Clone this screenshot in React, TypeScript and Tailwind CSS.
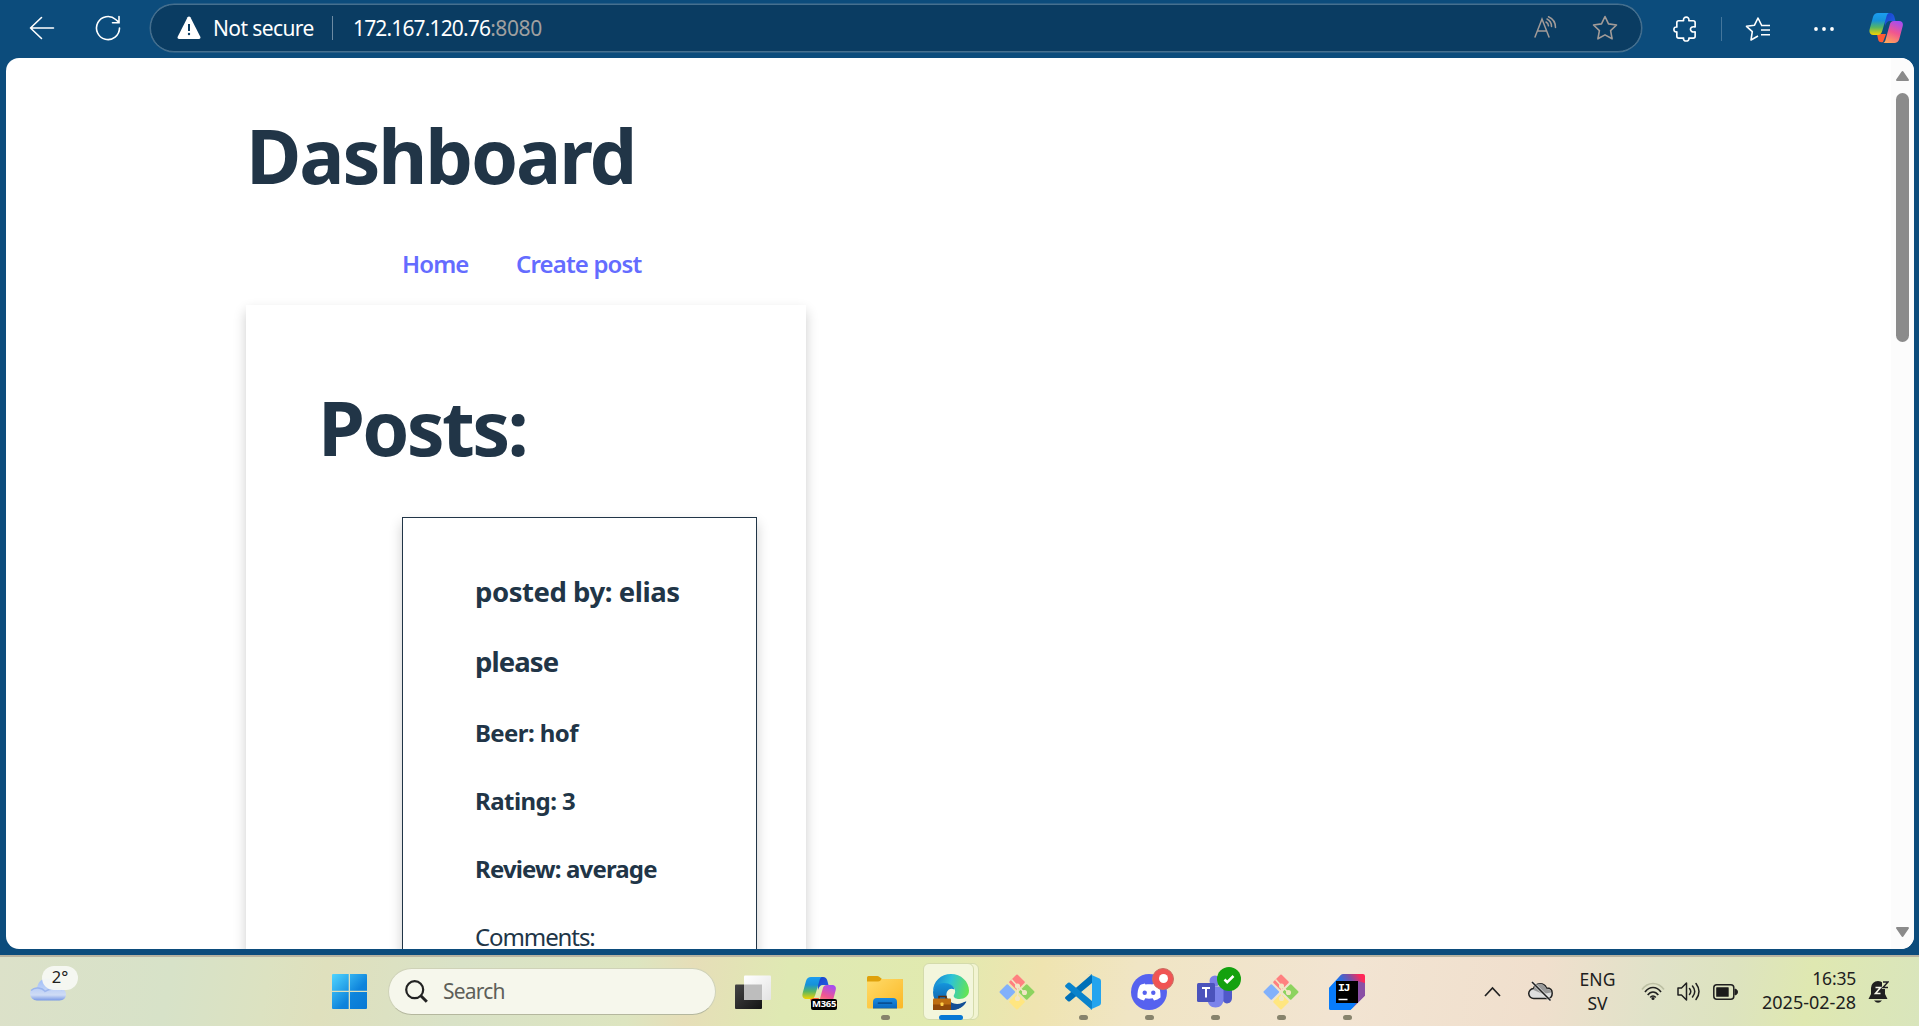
import type { ReactNode } from "react";

function GitIcon() {
  return (
    <svg className="size-9" viewBox="0 0 36 36">
      <g strokeWidth="2" strokeLinejoin="round">
        <path d="M18 1.500 24.800 8.300 18 15.100 11.200 8.300Z" fill="#ff8080" stroke="#ff8080" />
        <path d="M8.300 11.200 15.100 18 8.300 24.800 1.500 18Z" fill="#82b1fb" stroke="#82b1fb" />
        <path d="M27.700 11.200 34.500 18 27.700 24.800 20.900 18Z" fill="#8dd35f" stroke="#8dd35f" />
        <path d="M18 20.900 24.800 27.700 18 34.500 11.200 27.700Z" fill="#ffe680" stroke="#ffe680" />
      </g>
      <g stroke="#f2e6c4" strokeWidth="1.5" fill="#f2e6c4">
        <path d="M12.500 5.500 18.500 12V25M18.500 12 25.500 18.500" fill="none" />
        <circle cx="18.500" cy="12" r="1.800" />
        <circle cx="25.500" cy="18.500" r="1.800" />
        <circle cx="18.500" cy="24.500" r="1.800" />
      </g>
    </svg>
  );
}

function CopilotShape({ id }: { id: string }) {
  return (
    <>
      <defs>
        <linearGradient id={id + "a"} x1="0" y1="0" x2="0" y2="1">
          <stop offset="0" stopColor="#1b9df0" />
          <stop offset=".35" stopColor="#1692d8" />
          <stop offset=".65" stopColor="#55b565" />
          <stop offset="1" stopColor="#f5d400" />
        </linearGradient>
        <linearGradient id={id + "b"} x1=".7" y1="0" x2=".3" y2="1">
          <stop offset="0" stopColor="#a64df0" />
          <stop offset=".5" stopColor="#f1568f" />
          <stop offset="1" stopColor="#ffa45c" />
        </linearGradient>
        <linearGradient id={id + "c"} x1="0" y1="0" x2="1" y2="1">
          <stop offset="0" stopColor="#1a3fc8" />
          <stop offset="1" stopColor="#2063e8" />
        </linearGradient>
      </defs>
      <path d="M15 1h6c2.500 0 3.600 1.200 4.300 3.500L26.500 9H21c-3 0-4 2-5 5Z" fill={`url(#${id}c)`} />
      <path d="M8 22h9l-3 8c-3 1-4.500-.5-5-3Z" fill="#ff5a35" />
      <path d="M9 1h11.500c-2 0-2.500 1.700-3.300 4.500L13.200 19c-.8 2.500-2 4-5 4H4.500C1 23-.2 20.500.7 17L4 5C4.800 2.200 6.500 1 9 1Z" fill={`url(#${id}a)`} />
      <path d="M24 9h6c3.500 0 4.500 2.500 3.600 5.500L30.300 27c-.8 2.800-2.500 4-5 4H13.500c2.200 0 2.600-1.700 3.400-4.500L20.500 13.500C21.300 10.500 22 9 25 9Z" fill={`url(#${id}b)`} />
    </>
  );
}

function BrowserBar() {
  return (
    <header className="flex h-[58px] shrink-0 items-start bg-[#0c4c7c] text-white">
      <div className="flex h-14 w-[150px] items-center pl-[29px] gap-[40px]">
        <svg className="size-[26px]" viewBox="0 0 26 26" fill="none" stroke="white" strokeWidth="1.6" strokeLinecap="round" strokeLinejoin="round">
          <path d="M24.500 13H1.500M12.500 2.500 1.500 13l11 10.500" />
        </svg>
        <svg className="size-[26px]" viewBox="0 0 26 26" fill="none" stroke="white" strokeWidth="1.6" strokeLinecap="round">
          <path d="M24.500 13a11.500 11.500 0 1 1-3.800-8.500l3 2.700M24 1.500V7.700H17.500" />
        </svg>
      </div>
      <div className="mt-1 flex h-12 w-[1492px] items-center rounded-full border border-[#46708f] bg-[#0a3c62] shadow-[0_0_0_0.5px_#46708f]">
        <svg className="ml-[26px] size-6" viewBox="0 0 24 24">
          <path d="M10.600 1.200c.6-1.100 2.200-1.100 2.800 0l9.900 19.500c.6 1.200-.1 2.300-1.400 2.300H2.100c-1.300 0-2-1.100-1.400-2.300Z" fill="white" />
          <path d="M12 8v7" stroke="#0a3c62" strokeWidth="2" />
          <circle cx="12" cy="18" r="1.200" fill="#0a3c62" />
        </svg>
        <span className="ml-[12px] mt-0.5 w-[107px] whitespace-nowrap text-[21px] tracking-[-0.6px]">Not secure</span>
        <span className="ml-[12px] h-6 w-px bg-[#6d8ba3]" />
        <span className="ml-[20px] mt-0.5 whitespace-nowrap text-[21px] tracking-[-0.850px]">172.167.120.76<span className="tracking-[-0.4px] text-[#a0a0a0]">:8080</span></span>
        <svg className="ml-auto mr-[33px] h-6 w-[26px]" viewBox="0 0 26 24" fill="none" stroke="#a29b98" strokeWidth="1.500" strokeLinecap="round">
          <path d="M2 21 9 3l7 18M4.500 15h9M14 3c3.200 1.500 4.500 4 4.500 7.500M15.500.8c4.500 2 7 5.500 7 10.700M13 6c1.600.9 2.300 2 2.500 3.800" />
        </svg>
        <svg className="mr-[23px] size-[26px]" viewBox="0 0 26 26" fill="none" stroke="#a29b98" strokeWidth="1.600" strokeLinejoin="round">
          <path d="m13 1.500 3.500 7.400 8 1.100-5.900 5.600 1.500 8.200L13 19.900l-7.100 3.900 1.500-8.200L1.500 10l8-1.100Z" />
        </svg>
      </div>
      <div className="flex h-14 flex-1 items-center pl-[30px]">
        <svg className="mt-px size-[27px]" viewBox="0 0 28 28" fill="none" stroke="white" strokeWidth="1.700" strokeLinejoin="round">
          <path d="M7 6h5c-1-5 6.500-5 5.500 0H22c1.200 0 2 .8 2 2v4.500c-6.500-2-6.500 6.500 0 5V22c0 1.200-.8 2-2 2h-4.500c1 4-6.500 4-5.500 0H7c-1.200 0-2-.8-2-2v-4.500c-4 1-4-6 0-5V8c0-1.200.8-2 2-2Z" />
        </svg>
        <span className="ml-[22px] mt-0.5 h-6 w-px bg-[#44769c]" />
        <svg className="ml-[23px] mt-px size-[26px]" viewBox="0 0 26 26" fill="none" stroke="white" strokeWidth="1.600" strokeLinejoin="round">
          <path d="M24.500 9.500h-7.800L13 2 9.500 9.200l-8 1.100 5.800 5.400L6 24l7-4M16 14h9M16 18.800h9M16 9.500h9" />
        </svg>
        <svg className="ml-[43px] mt-0.5 h-2 w-5" viewBox="0 0 20 8" fill="white">
          <circle cx="2" cy="4" r="1.900" /><circle cx="10" cy="4" r="1.900" /><circle cx="18" cy="4" r="1.900" />
        </svg>
        <svg className="ml-[35px] h-8 w-[34px]" viewBox="0 0 34 32"><CopilotShape id="top" /></svg>
      </div>
    </header>
  );
}

function Dashboard() {
  return (
    <main className="relative mx-1.5 mr-[5px] flex h-[891px] shrink-0 overflow-hidden rounded-[13px] bg-white text-[#213547]">
      <div className="ml-[240px] w-[560px] pt-[55px]">
        <h1 className="h-[84px] whitespace-nowrap text-[75.6px] leading-[84px] font-bold tracking-[-2.1px]">Dashboard</h1>
        <nav className="mt-[49px] flex h-9 gap-12 pl-[156px] text-[24px] leading-9 font-semibold text-[#646cff]">
          <a className="w-[66px] whitespace-nowrap tracking-[-0.9px]">Home</a>
          <a className="whitespace-nowrap tracking-[-0.850px]">Create post</a>
        </nav>
        <section className="mt-[23px] h-[900px] pl-[72px] pt-[80px] shadow-[0_6px_12px_rgba(0,0,0,0.2)]">
          <h1 className="h-[84px] whitespace-nowrap text-[75.6px] leading-[84px] font-bold tracking-[-2.700px]">Posts:</h1>
          <article className="mt-[48px] ml-[84px] flex h-[700px] w-[355px] flex-col border border-[#213547] pt-[53px] pl-[72px] text-[24px] leading-9 font-bold shadow-[0_6px_12px_rgba(0,0,0,0.2)]">
            <h3 className="text-[27.500px] leading-[42px] tracking-[-0.450px]">posted by: elias</h3>
            <h3 className="mt-7 text-[27.500px] leading-[42px] tracking-[-0.9px]">please</h3>
            <h4 className="mt-8 tracking-[-0.6px]">Beer: hof</h4>
            <h4 className="mt-8 tracking-[-0.550px]">Rating: 3</h4>
            <h4 className="mt-8 tracking-[-0.850px]">Review: average</h4>
            <p className="mt-8 font-normal tracking-[-1.1px]">Comments:</p>
          </article>
        </section>
      </div>
      <div className="ml-auto flex w-[23px] flex-col items-center bg-[#fcfcfc] pt-[12px] pb-[11px]">
        <svg className="h-3 w-[15px]" viewBox="0 0 15 12"><path d="M7.500 2 13 10H2Z" fill="#8b8b8b" stroke="#8b8b8b" strokeWidth="2" strokeLinejoin="round" /></svg>
        <div className="mt-[11px] h-[249px] w-[13px] rounded-full bg-[#8b8b8b]" />
        <svg className="mt-auto h-3 w-[15px]" viewBox="0 0 15 12"><path d="M7.500 10 13 2H2Z" fill="#8b8b8b" stroke="#8b8b8b" strokeWidth="2" strokeLinejoin="round" /></svg>
      </div>
    </main>
  );
}

function TaskItem({ children, running = false }: { children: ReactNode; running?: boolean }) {
  return (
    <div className="relative flex h-[69px] w-[66px] items-center justify-center">
      {children}
      {running && <span className="absolute top-[58px] left-[29px] h-[5px] w-[9px] rounded-full bg-[#87836c]" />}
    </div>
  );
}

function Taskbar() {
  return (
    <footer className="flex h-[71px] shrink-0 items-center border-t-2 border-[#b8b3a0] bg-[linear-gradient(100deg,#dce1c9_0%,#d7e2c8_9%,#dce2c1_14%,#dfe0bd_17%,#d9e2c7_24%,#dde5c0_33%,#e6deb8_36%,#dfe9b3_41%,#e1eaaf_49%,#efe4b0_54%,#f0e5c4_59%,#f2e4d2_70%,#f0dfcd_80%,#e0e2c8_86%,#dde3bf_90%,#dfe8b1_94%,#d9e5bc_100%)] text-[#202020]">
      <div className="relative ml-[30px] h-9 w-[302px]">
        <svg className="mt-1 h-[23px] w-9" viewBox="0 0 36 24" preserveAspectRatio="none">
          <defs><linearGradient id="cloud" x1="0" y1="0" x2="0" y2="1"><stop stopColor="#9ebcf8" /><stop offset=".75" stopColor="#cfdcf5" /><stop offset="1" stopColor="#7798e6" /></linearGradient></defs>
          <path d="M7 23.500a7 7 0 0 1-7-7c0-4 3-6.500 7-6.500C8.500 3.500 12 .5 17 .5c5.500 0 9 4.500 10 9.500 5 0 9 2.500 9 7 0 4-2.500 6.500-6.500 6.500Z" fill="url(#cloud)" />
          <path d="M1 13c4-4 11-3 14 1 4-3 12-4 17-2" stroke="#84a4ea" strokeWidth="1.500" fill="none" opacity=".6" />
        </svg>
        <span className="absolute -top-[8px] left-3 flex h-6 w-9 items-center justify-center rounded-full bg-[#f7f8f3]/95 text-[16.500px]">2°</span>
      </div>
      <svg className="size-[35px]" viewBox="0 0 35 35">
        <defs><linearGradient id="win" gradientUnits="userSpaceOnUse" x1="0" y1="0" x2="35" y2="35"><stop stopColor="#4fd5ff" /><stop offset=".6" stopColor="#0e84dc" /><stop offset="1" stopColor="#0878d4" /></linearGradient></defs>
        <path d="M1 0h15.700v16.700H0V1Q0 0 1 0ZM18 0h16q1 0 1 1v15.700H18ZM0 18h16.700v17H1q-1 0-1-1ZM18 18h17v16q0 1-1 1H18Z" fill="url(#win)" />
      </svg>
      <div className="ml-[21px] flex h-[47px] w-[328px] items-center rounded-full border border-[#cfd2b8] border-b-[#b4b79e] bg-[#f6f7ec] pl-[16px] text-[21px] tracking-[-0.8px] text-[#5e5f59]">
        <svg className="mr-[15px] size-[23px]" viewBox="0 0 23 23" fill="none" stroke="#222" strokeWidth="2.200">
          <circle cx="9.700" cy="9.700" r="8.500" /><path d="m15.800 15.800 6 6" strokeWidth="3" />
        </svg>
        Search
      </div>
      <div className="ml-[4px] flex">
        <TaskItem>
          <svg className="size-9" viewBox="0 0 36 36">
            <defs><linearGradient id="tv" x1="0" y1="0" x2="1" y2="1"><stop stopColor="#444" /><stop offset="1" stopColor="#141414" /></linearGradient><linearGradient id="tw" x1="0" y1="0" x2="1" y2="1"><stop stopColor="#fff" /><stop offset="1" stopColor="#e4e4e4" /></linearGradient></defs>
            <rect x="0" y="10.500" width="27" height="24.500" rx="1" fill="url(#tv)" />
            <rect x="9" y="1.500" width="27" height="24.500" rx="1" fill="url(#tw)" />
            <path d="M9 10.500h18V26H9Z" fill="#bdbdbd" />
          </svg>
        </TaskItem>
        <TaskItem>
          <div className="relative size-9">
            <svg className="mt-0.5 h-8 w-9" viewBox="0 0 34 32"><CopilotShape id="m365" /></svg>
            <span className="absolute top-[25px] left-[10px] flex h-[11px] w-[26px] items-center justify-center rounded-[2px] bg-black text-[9.500px] leading-none font-bold tracking-[-0.3px] text-white">M365</span>
          </div>
        </TaskItem>
        <TaskItem running>
          <svg className="size-9" viewBox="0 0 36 36">
            <defs><linearGradient id="fold" x1="0" y1="0" x2="1" y2="1"><stop stopColor="#ffdb69" /><stop offset="1" stopColor="#fbb826" /></linearGradient><linearGradient id="tray" x1="0" y1="0" x2="0" y2="1"><stop stopColor="#1a8be0" /><stop offset="1" stopColor="#0b67bd" /></linearGradient></defs>
            <path d="M0 3.500Q0 2 1.500 2h8.700q1.200 0 2 .8L15 5h19.500Q36 5 36 6.500V15H0Z" fill="#dfa10b" />
            <path d="M0 7.500h11q1.500 0 2.500-1L14.500 5H34.500Q36 5 36 6.500V33q0 1.500-1.500 1.500h-33Q0 34.500 0 33Z" fill="url(#fold)" />
            <path d="M6 34.500V28q0-4 4-4h16q4 0 4 4v6.500Z" fill="url(#tray)" />
            <path d="M11.500 29.200h13" stroke="#084f94" strokeWidth="1.700" strokeLinecap="round" />
          </svg>
        </TaskItem>
        <div className="relative flex h-[69px] w-[66px] items-center justify-center">
          <span className="absolute top-[6px] left-[10px] h-[57px] w-[51px] rounded-[6px] border border-[#d4dbab] bg-[#f2f4d2]" />
          <span className="absolute top-[6px] left-[5px] h-[57px] w-[51px] rounded-[6px] border border-[#d4dbab] bg-[#f3f6dc]" />
          <svg className="relative size-9" viewBox="0 0 36 36">
            <defs>
              <linearGradient id="edge" x1="0" y1=".4" x2="1" y2=".6"><stop stopColor="#1688d4" /><stop offset=".45" stopColor="#2cc2d8" /><stop offset="1" stopColor="#66e650" /></linearGradient>
              <linearGradient id="edge2" x1="0" y1="0" x2="0" y2="1"><stop stopColor="#1595dc" /><stop offset="1" stopColor="#0b4d98" /></linearGradient>
            </defs>
            <path d="M0 18C0 7 8 0 18 0s18 7.500 18 16.500c0 5.500-4.500 8.500-9.500 8.500-5 0-6.500-2.500-5.500-4 3.500-5-1-11-9-11C6 10 1 13 0 18Z" fill="url(#edge)" />
            <path d="M0 18c1-6 6-9 11-9 6 0 10 3 10.500 6.500C16 12.500 12 18 14 23.500c2 5 8 8.500 14 6.500 3-.8 5.500-3 5.500-2.500C30 33 25 36 18 36 8 36 0 28 0 18Z" fill="url(#edge2)" />
            <path d="M14 23.500c2 5.500 9 8 15 5.500 2-.8 4.500-2.500 4-1C30 33.500 25 36 18 36Z" fill="#155096" />
            <path d="M6 25v-2.500h7V25" fill="none" stroke="#5e2c08" strokeWidth="1.500" />
            <rect y="24.500" width="18" height="11.500" rx="1" fill="#bd6d10" /><path d="M0 30.500h18V36H0Z" fill="#8f490a" /><rect x="7.500" y="28.500" width="3" height="3.500" rx=".8" fill="#ffd04a" />
          </svg>
          <span className="absolute top-[58px] left-[21px] h-[5px] w-6 rounded-full bg-[#0878d4]" />
        </div>
        <TaskItem><GitIcon /></TaskItem>
        <TaskItem running>
          <svg className="size-9" viewBox="0 0 36 36">
            <path d="M27 0v9L5 27.200Q4 28 3 27.200L.6 25Q-.5 24 .6 22.800Z" fill="#0070b8" />
            <path d="M27 36v-9L5 8.800Q4 8 3 8.800L.6 11Q-.5 12 .6 13.200Z" fill="#0a83cc" />
            <path d="M25.500.6 34.500 4.500Q36 5.200 36 7v22q0 1.800-1.500 2.500l-9 4c-.8.300-1.500 0-2-.6 1.200 1 3.500.4 3.500-1.500V2.500C27 .6 24.700 0 23.500 1c.5-.5 1.200-.8 2-.4Z" fill="#24a4ee" />
          </svg>
        </TaskItem>
        <TaskItem running>
          <div className="relative size-9">
            <svg className="size-9" viewBox="0 0 36 36">
              <circle cx="18" cy="18" r="18" fill="#5662ef" />
              <path d="M14.500 10.500 13.800 9.500C11.500 10 10 10.700 9 11.200 7 14.500 6.300 18 6.500 23.500c2 1.700 4.300 2.500 6.500 3l1.300-2.300c2.500.6 5 .6 7.400 0l1.300 2.300c2.200-.5 4.500-1.300 6.500-3 .2-5.500-.5-9-2.500-12.300-1.300-.7-3-1.300-4.800-1.700l-.7 1c-2.300-.4-4.700-.4-7 0Z" fill="white" />
              <circle cx="13.700" cy="18.700" r="2.200" fill="#5662ef" /><circle cx="22.300" cy="18.700" r="2.200" fill="#5662ef" />
            </svg>
            <span className="absolute -top-[6px] left-[21px] flex size-[22px] items-center justify-center rounded-full border border-[#c97063] bg-[#f05454]"><span className="size-[9px] rounded-full bg-white" /></span>
          </div>
        </TaskItem>
        <TaskItem running>
          <div className="relative size-9">
            <svg className="size-9" viewBox="0 0 36 36">
              <circle cx="18" cy="7" r="5.500" fill="#7a7fe8" />
              <path d="M26 12.500h9V24c0 6-7 7-9 3Z" fill="#5059c9" />
              <path d="M10.500 12.500h16V25c0 5-3.200 8.500-8 8.500s-8-3.500-8-8.500Z" fill="#7b83eb" />
              <rect y="9" width="18" height="19" rx="1.500" fill="#4b53bc" />
              <path d="M5 14h8M9 14v9.500" stroke="white" strokeWidth="2" />
            </svg>
            <span className="absolute -top-[7px] left-5 flex size-6 items-center justify-center rounded-full bg-[#13a10e]">
              <svg className="h-3 w-3.5" viewBox="0 0 14 12" fill="none" stroke="white" strokeWidth="2.500"><path d="m2.500 6.500 2.700 2.700L11.500 3" /></svg>
            </span>
          </div>
        </TaskItem>
        <TaskItem running><GitIcon /></TaskItem>
        <TaskItem running>
          <div className="relative size-9">
            <svg className="size-9" viewBox="0 0 36 36">
              <defs><linearGradient id="ij" x1=".15" y1=".6" x2=".9" y2=".1"><stop offset=".3" stopColor="#087cfa" /><stop offset=".7" stopColor="#7850a8" /><stop offset="1" stopColor="#ff2858" /></linearGradient></defs>
              <path d="M14 0h20q2 0 2 2v19.500L22.500 35q-1 1-2 1H2q-2 0-2-2V14.500q0-1 1-1.800L12 .8Q13 0 14 0Z" fill="url(#ij)" />
              <path d="M36 9v12.500L22.500 35l5-6V7Z" fill="#8a4fa5" />
              <path d="M0 14.500 7 8v21h20L21.500 36H2q-2 0-2-2Z" fill="#087cfa" />
              <rect x="7" y="7" width="22" height="22" /><path d="M9.500 25.500h9" stroke="white" strokeWidth="1.500" />
            </svg>
            <span className="absolute top-[8px] left-[9px] font-['Liberation_Mono'] text-[11.500px] leading-none font-bold tracking-[-1.500px] text-white">IJ</span>
          </div>
        </TaskItem>
      </div>
      <div className="ml-auto flex h-full items-center text-[17.500px] leading-[23.500px]">
        <svg className="h-[11px] w-[17px]" viewBox="0 0 17 11" fill="none" stroke="#222" strokeWidth="1.700"><path d="m1 10 7.500-8L16 10" /></svg>
        <svg className="ml-[27px] h-[21px] w-[25px]" viewBox="0 0 25 21">
          <path d="M6 17.500a5 5 0 0 1-.5-10A7 7 0 0 1 18.500 7c3.500 0 5.700 2 5.700 5.200s-2 5.300-5.200 5.300Z" fill="#dedede" stroke="#202020" strokeWidth="1.500" />
          <path d="M5.500 9C7 1 16 1 18.500 8c3 0 4.500 1.500 4.700 3.500L15 13Z" fill="#999" />
          <path d="m4 1 18.500 18.500" stroke="#eee" strokeWidth="3" opacity=".7" /><path d="m4 1 18.500 18.500" stroke="#202020" strokeWidth="1.600" />
        </svg>
        <div className="ml-[26px] w-[37px] text-center">ENG<br />SV</div>
        <svg className="ml-[25px] h-[20px] w-6" viewBox="0 0 24 20" fill="none" stroke="#1f1f1f" strokeWidth="1.700">
          <path d="M1 7.500C7-.5 17-.5 23 7.500" stroke="#bdc0a4" /><path d="M4 10c4.500-6 11.500-6 16 0M6.700 13c3-4 7.600-4 10.600 0" /><path d="M9.300 15.500c1.600-2 3.800-2 5.400 0" /><circle cx="12" cy="16.500" r="1.500" fill="#1f1f1f" stroke="none" />
        </svg>
        <svg className="ml-[12px] h-[21px] w-[25px]" viewBox="0 0 25 21" fill="none" stroke="#1f1f1f" strokeWidth="1.500" strokeLinejoin="round">
          <path d="M1 7h3.500L9.500 2v17l-5-5H1Z" /><path d="M12.500 7.500q2.500 3 0 6M15.500 5q4.500 5.500 0 11M19 2.500Q25 10.500 19 18.500" strokeLinecap="round" />
        </svg>
        <svg className="ml-[11px] h-4 w-[25px]" viewBox="0 0 25 16">
          <rect x=".8" y=".8" width="20" height="14.400" rx="3" fill="none" stroke="#1f1f1f" strokeWidth="1.500" /><rect x="3.200" y="3.200" width="12.500" height="9.600" rx=".6" fill="#1a1a1a" /><path d="M22 5q2.500.5 2.500 3T22 11Z" fill="#1f1f1f" stroke="#1f1f1f" />
        </svg>
        <div className="ml-[21px] w-[97px] -mt-0.5 text-right whitespace-nowrap"><span className="tracking-[-0.2px]">16:35</span><br /><span className="text-[18px]">2025-02-28</span></div>
        <div className="relative ml-[12px] mr-[30px] h-6 w-[21px]">
          <svg className="h-6 w-[21px]" viewBox="0 0 21 24"><path d="M10 1a7 7 0 0 1 7 7v6l2.500 5h-19L3 14V8a7 7 0 0 1 7-7Z" fill="#1f1f1f" /><path d="M6 20.500h8q-4 4.500-8 0Z" fill="#1f1f1f" /><path d="M14 1h7v8h-7Z" fill="#dfe8b7" /><path d="M7.500 7.500h5l-5 6h5M15 2h5l-5 5.500h5" fill="none" stroke="#f5f5e8" strokeWidth="1.600" /><path d="M15 2h5l-5 5.500h5" fill="none" stroke="#1f1f1f" strokeWidth="1.500" /></svg>
        </div>
      </div>
    </footer>
  );
}

export default function App() {
  return (
    <div className="flex h-[1026px] w-[1919px] flex-col overflow-hidden bg-[#0c4c7c] font-['Noto_Sans',sans-serif]">
      <BrowserBar />
      <Dashboard />
      <div className="h-1.5 shrink-0" />
      <Taskbar />
    </div>
  );
}
